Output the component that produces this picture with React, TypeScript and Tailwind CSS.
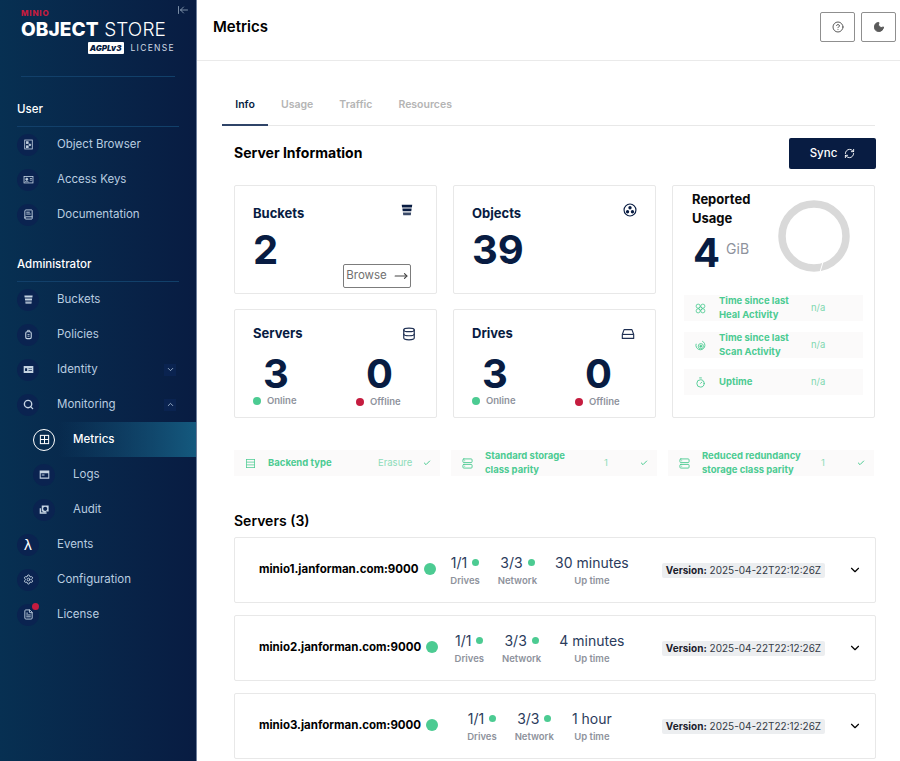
import React from "react";
import { ChevronDown, ChevronUp, Check, CircleHelp, Database, Moon, RefreshCw, Timer, MoveRight, ArrowLeftToLine, Settings, Server, FileText, BookText, KeyRound, Search } from "lucide-react";

const BucketIcon = ({ className }: { className?: string }) => (
  <svg viewBox="0 0 16 16" className={className} fill="currentColor">
    <path d="M2 2h12l-.4 3H2.4z" />
    <path d="M2.7 6.4h10.6l-.4 3H3.1z" />
    <path d="M3.3 10.8h9.4l-.4 3.2H3.7z" opacity="0.8" />
  </svg>
);

const ObjectsIcon = ({ className }: { className?: string }) => (
  <svg viewBox="0 0 16 16" className={className} fill="currentColor">
    <circle cx="8" cy="8" r="6.8" fill="none" stroke="currentColor" strokeWidth="1.3" />
    <circle cx="8" cy="5.4" r="1.9" />
    <circle cx="5.2" cy="10" r="1.9" />
    <circle cx="10.8" cy="10" r="1.9" />
  </svg>
);

const DriveIcon = ({ className }: { className?: string }) => (
  <svg viewBox="0 0 16 16" className={className} fill="none" stroke="currentColor" strokeWidth="1.3">
    <path d="M3.5 3h9l2 5.5v4.5h-13V8.5z" strokeLinejoin="round" />
    <path d="M1.5 8.5h13" />
  </svg>
);

const HealIcon = ({ className }: { className?: string }) => (
  <svg viewBox="0 0 16 16" className={className} fill="none" stroke="currentColor" strokeWidth="1.2">
    <circle cx="4.6" cy="4.6" r="3" />
    <circle cx="11.4" cy="4.6" r="3" />
    <circle cx="4.6" cy="11.4" r="3" />
    <circle cx="11.4" cy="11.4" r="3" />
    <rect x="6" y="6" width="4" height="4" transform="rotate(45 8 8)" />
  </svg>
);

const ScanIcon = ({ className }: { className?: string }) => (
  <svg viewBox="0 0 16 16" className={className} fill="none" stroke="currentColor" strokeWidth="1.2">
    <path d="M3 3.5A6.5 6.5 0 1 0 12.5 3" transform="rotate(-20 8 8)" />
    <circle cx="8.5" cy="9" r="3.8" />
    <circle cx="8.5" cy="9" r="1.5" fill="currentColor" />
  </svg>
);

const StackIcon = ({ className }: { className?: string }) => (
  <svg viewBox="0 0 16 16" className={className} fill="none" stroke="currentColor" strokeWidth="1.1">
    <rect x="2" y="2" width="12" height="12" />
    <path d="M2 6h12M2 10h12" />
  </svg>
);

const MetricsIcon = ({ className }: { className?: string }) => (
  <svg viewBox="0 0 16 16" className={className} fill="none" stroke="currentColor" strokeWidth="1.5">
    <rect x="2" y="2" width="12" height="12" />
    <path d="M8 2v12M2 8h12" />
  </svg>
);

const ObjectBrowserIcon = ({ className }: { className?: string }) => (
  <svg viewBox="0 0 16 16" className={className} fill="none" stroke="currentColor" strokeWidth="1.2">
    <rect x="2.5" y="1.5" width="11" height="13" />
    <rect x="5" y="4" width="2.5" height="2.5" fill="currentColor" />
    <circle cx="10" cy="8.5" r="1.3" fill="currentColor" />
    <rect x="5" y="10" width="2.5" height="2.5" fill="currentColor" />
  </svg>
);

const AccessKeyIcon = ({ className }: { className?: string }) => (
  <svg viewBox="0 0 16 16" className={className} fill="none" stroke="currentColor" strokeWidth="1.2">
    <rect x="1.5" y="3.5" width="13" height="9.5" />
    <circle cx="5.5" cy="7.5" r="1.5" fill="currentColor" />
    <path d="M3 11.5c.6-1.4 4.4-1.4 5 0M10 6.5h3M10 9h3" />
  </svg>
);

const PolicyIcon = ({ className }: { className?: string }) => (
  <svg viewBox="0 0 16 16" className={className} fill="none" stroke="currentColor" strokeWidth="1.6">
    <rect x="4" y="4" width="8" height="10" rx="2" />
    <path d="M6.5 4V2h3v2M6.5 8h3M6.5 10.5h3" strokeWidth="1.2" />
  </svg>
);

const IdentityIcon = ({ className }: { className?: string }) => (
  <svg viewBox="0 0 16 16" className={className} fill="currentColor">
    <path fillRule="evenodd" d="M1 3h14v10H1zM3 6v4h3V6zm5 0v1h5V6zm0 3v1h5V9z" />
  </svg>
);

const LogsIcon = ({ className }: { className?: string }) => (
  <svg viewBox="0 0 16 16" className={className} fill="currentColor">
    <path fillRule="evenodd" d="M1 2h14v12H1zm1.5 4v6.5h11V6zM4 8h4v1.5H4z" />
  </svg>
);

const AuditIcon = ({ className }: { className?: string }) => (
  <svg viewBox="0 0 16 16" className={className} fill="currentColor">
    <path fillRule="evenodd" d="M4 2h10v9h-3.5a3 3 0 0 1-5 0H4zm5 2a3 3 0 1 0 0 6 3 3 0 0 0 0-6z" />
    <path d="M1 6h2v6h8v2H1z" />
  </svg>
);

type NavItem = {
  label: string;
  icon: React.ReactNode;
  sub?: boolean;
  active?: boolean;
  chevron?: "down" | "up";
  badge?: boolean;
};

const userItems: NavItem[] = [
  { label: "Object Browser", icon: <ObjectBrowserIcon className="w-[11px] h-[11px]" /> },
  { label: "Access Keys", icon: <AccessKeyIcon className="w-[11px] h-[11px]" /> },
  { label: "Documentation", icon: <BookText className="w-[11px] h-[11px]" /> },
];

const adminItems: NavItem[] = [
  { label: "Buckets", icon: <BucketIcon className="w-[11px] h-[11px]" /> },
  { label: "Policies", icon: <PolicyIcon className="w-[11px] h-[11px]" /> },
  { label: "Identity", icon: <IdentityIcon className="w-[11px] h-[11px]" />, chevron: "down" },
  { label: "Monitoring", icon: <Search className="w-[11px] h-[11px]" strokeWidth={3} />, chevron: "up" },
  { label: "Metrics", icon: <MetricsIcon className="w-[11px] h-[11px]" />, sub: true, active: true },
  { label: "Logs", icon: <LogsIcon className="w-[11px] h-[11px]" />, sub: true },
  { label: "Audit", icon: <AuditIcon className="w-[11px] h-[11px]" />, sub: true },
  { label: "Events", icon: <span className="text-[14px] leading-none font-['DejaVu_Sans'] text-white">λ</span> },
  { label: "Configuration", icon: <Settings className="w-[11px] h-[11px]" /> },
  { label: "License", icon: <FileText className="w-[11px] h-[11px]" />, badge: true },
];

const NavRow = ({ item }: { item: NavItem }) => (
  <div
    className={`h-[35px] flex items-center gap-[18px] ${item.sub ? "pl-[33px]" : "pl-[17px]"} pr-[20px] ${
      item.active ? "bg-gradient-to-r from-transparent from-30% to-[#14597e] text-white" : "text-[#b9cde0]"
    }`}
  >
    <div
      className={`relative w-[22px] h-[22px] rounded-full flex items-center justify-center shrink-0 ${
        item.active ? "border border-white text-white" : "bg-[#0a2350] text-[#c5d3e2]"
      }`}
    >
      {item.icon}
      {item.badge && <span className="absolute -top-[1px] right-0 w-[7px] h-[7px] rounded-full bg-[#c51c3f]" />}
    </div>
    <span className={`text-[11.5px] flex-1 ${item.active ? "font-medium" : ""}`}>{item.label}</span>
    {item.chevron && (
      <span className="w-[12px] h-[12px] bg-[#0a2350] flex items-center justify-center">
        {item.chevron === "down" ? <ChevronDown className="w-[9px] h-[9px]" /> : <ChevronUp className="w-[9px] h-[9px]" />}
      </span>
    )}
  </div>
);

const SectionTitle = ({ title }: { title: string }) => (
  <div className="h-[50px] mx-[17px] flex items-end pb-[8px] border-b border-[#12406a] text-white text-[11.5px] font-medium leading-[18px]">
    {title}
  </div>
);

const Sidebar = () => (
  <aside className="w-[197px] shrink-0 h-full bg-gradient-to-r from-[#073052] to-[#081c42] border-r border-[#6f7f9b] flex flex-col">
    <div className="h-[77px] mx-[21px] border-b border-[#12406a] relative">
      <ArrowLeftToLine className="absolute left-[156px] top-[4px] w-[12px] h-[12px] text-[#9fb2c6] rotate-0" strokeWidth={1.5} />
      <div className="pt-[7px] text-[#c51c3f] text-[8px] leading-[12px] font-extrabold tracking-[0.8px]">MINIO</div>
      <div className="text-white text-[19px] leading-[20px] mt-[1px] whitespace-nowrap tracking-[0.1px]">
        <span className="font-extrabold">OBJECT</span> <span className="font-light">STORE</span>
      </div>
      <div className="flex items-center justify-end gap-[7px] mt-[2px] h-[12px]">
        <span className="h-[12px] px-[2px] bg-white text-[#081c42] text-[8px] leading-[12px] font-black italic rounded-[1px]">AGPLv3</span>
        <span className="text-[#cfd8e3] text-[8.5px] tracking-[1.3px]">LICENSE</span>
      </div>
    </div>
    <SectionTitle title="User" />
    {userItems.map((item) => (
      <NavRow key={item.label} item={item} />
    ))}
    <SectionTitle title="Administrator" />
    {adminItems.map((item) => (
      <NavRow key={item.label} item={item} />
    ))}
  </aside>
);

const StatusDot = ({ color, label }: { color: string; label: string }) => (
  <div className="flex items-center gap-[6px] text-[9.5px] font-semibold text-[#8e929c] leading-[12px]">
    <span className={`w-[8px] h-[8px] rounded-full ${color}`} />
    {label}
  </div>
);

const CountCard = ({ title, icon, online, offline }: { title: string; icon: React.ReactNode; online: number; offline: number }) => (
  <div className="h-[109px] border border-[#e8e8e8] rounded-[2px] pl-[18px] pr-[20px] pt-[14px]">
    <div className="flex justify-between items-start h-[22px]">
      <span className="text-[13px] font-bold text-[#081c42]">{title}</span>
      <span className="text-[#1e2f52] mt-[3px]">{icon}</span>
    </div>
    <div className="grid grid-cols-[103px_1fr] mt-[8px]">
      <div>
        <div className="text-[40px] leading-[40px] font-bold text-[#081c42] pl-[10px]">{online}</div>
        <div className="mt-[1px]">
          <StatusDot color="bg-[#4ccb92]" label="Online" />
        </div>
      </div>
      <div>
        <div className="text-[40px] leading-[40px] font-bold text-[#081c42] pl-[10px]">{offline}</div>
        <div className="mt-[2px]">
          <StatusDot color="bg-[#c51c3f]" label="Offline" />
        </div>
      </div>
    </div>
  </div>
);

const UsageStat = ({ icon, label }: { icon: React.ReactNode; label: React.ReactNode }) => (
  <div className="h-[26px] bg-[#fbfafa] flex items-center text-[#4ccb92] pl-[11px]">
    <span className="w-[24px] shrink-0">{icon}</span>
    <span className="w-[92px] text-[9.5px] font-bold leading-[14px]">{label}</span>
    <span className="text-[9.5px] font-normal text-[#7fd8b0]">n/a</span>
  </div>
);

const FeatureBox = ({ icon, label, value, valueWidth }: { icon: React.ReactNode; label: React.ReactNode; value: string; valueWidth: string }) => (
  <div className="h-[26px] bg-[#fbfafa] flex items-center text-[#4ccb92] pl-[11px] pr-[9px]">
    <span className="w-[23px] shrink-0">{icon}</span>
    <span className="flex-1 text-[9.5px] font-bold leading-[14px] whitespace-nowrap">{label}</span>
    <span className={`${valueWidth} text-[9.5px] font-normal text-[#8ddcb9]`}>{value}</span>
    <Check className="w-[8px] h-[8px]" strokeWidth={3} />
  </div>
);

const ServerCard = ({ host, uptime }: { host: string; uptime: string }) => (
  <div className="h-[66px] shrink-0 border border-[#e8e8e8] rounded-[2px] flex items-center pl-[24px] pr-[13px]">
    <div className="w-[174px] flex items-center gap-[4px] shrink-0">
      <span className="text-[11.5px] font-bold text-black whitespace-nowrap">{host}</span>
      <span className="w-[12px] h-[12px] rounded-full bg-[#4ccb92] shrink-0 ml-[1px] -mt-[2px]" />
    </div>
    <div className="flex-1 flex justify-center gap-[18px]">
      <Metric value="1/1" label="Drives" dot />
      <Metric value="3/3" label="Network" dot />
      <Metric value={uptime} label="Up time" />
    </div>
    <div className="w-[163px] h-[15px] bg-[#eceef0] rounded-[2px] text-[10px] leading-[15px] text-center text-[#333a45] whitespace-nowrap shrink-0 ml-[16px]">
      <span className="font-bold text-[#1a202b]">Version:</span> 2025-04-22T22:12:26Z
    </div>
    <ChevronDown className="w-[14px] h-[14px] text-black ml-[23px] shrink-0" />
  </div>
);

const Metric = ({ value, label, dot }: { value: string; label: string; dot?: boolean }) => (
  <div className="flex flex-col items-center">
    <div className="flex items-center gap-[5px] text-[14px] leading-[18px] text-[#2b3b5c] whitespace-nowrap">
      {value}
      {dot && <span className="w-[7px] h-[7px] rounded-full bg-[#4ccb92]" />}
    </div>
    <span className="text-[9.5px] leading-[12px] font-semibold text-[#8e929c] mt-[3px]">{label}</span>
  </div>
);

export default function App() {
  return (
    <div className="w-[900px] h-[761px] overflow-hidden flex bg-white font-['Inter',sans-serif]">
      <Sidebar />
      <main className="flex-1 min-w-0">
        <header className="h-[61px] border-b border-[#eaeaea] flex items-center justify-between pl-[16px] pr-[4px] pb-[6px]">
          <h1 className="text-[15px] font-semibold text-black">Metrics</h1>
          <div className="flex gap-[6px]">
            <button className="w-[35px] h-[30px] border border-[#8f8f8f] rounded-[2px] flex items-center justify-center text-[#5a5a5a]">
              <CircleHelp className="w-[12px] h-[12px]" />
            </button>
            <button className="w-[35px] h-[30px] border border-[#8f8f8f] rounded-[2px] flex items-center justify-center text-[#5a5a5a]">
              <Moon className="w-[12px] h-[12px]" fill="currentColor" />
            </button>
          </div>
        </header>
        <div className="pl-[25px] pr-[25px]">
          <nav className="mt-[29px] h-[36px] border-b border-[#e8e8e8] flex text-[10.5px] font-semibold text-[#b4b4b4]">
            <span className="w-[46px] h-[36px] border-b-2 border-[#2f4468] text-[#081c42] flex items-center justify-center pb-[4px]">Info</span>
            <span className="ml-[13px] pb-[6px] flex items-center">Usage</span>
            <span className="ml-[26px] pb-[6px] flex items-center">Traffic</span>
            <span className="ml-[26px] pb-[6px] flex items-center">Resources</span>
          </nav>
          <div className="pl-[12px] -mr-[1px]">
            <div className="flex justify-between items-center mt-[12px] h-[31px]">
              <h2 className="text-[14px] font-bold text-black -mt-[3px]">Server Information</h2>
              <button className="w-[87px] h-[31px] rounded-[2px] bg-[#081c42] text-white text-[11.5px] font-medium flex items-center justify-center gap-[7px]">
                Sync <RefreshCw className="w-[11px] h-[11px]" />
              </button>
            </div>
            <div className="grid grid-cols-[203px_203px_203px] gap-x-[16px] gap-y-[15px] mt-[16px]">
              <div className="h-[109px] border border-[#e8e8e8] rounded-[2px] pl-[18px] pr-[22px] pt-[14px] relative">
                <div className="flex justify-between items-start h-[28px]">
                  <span className="text-[13px] font-bold text-[#081c42] mt-[4px]">Buckets</span>
                  <BucketIcon className="w-[14px] h-[14px] text-[#081c42] mt-[3px]" />
                </div>
                <div className="text-[40px] leading-[44px] font-bold text-[#081c42]">2</div>
                <button className="absolute right-[25px] bottom-[5px] w-[68px] h-[24px] border border-[#7c7c7c] rounded-[2px] text-[#6f6f6f] text-[11.5px] flex items-center justify-center gap-[7px]">
                  Browse <MoveRight className="w-[14px] h-[14px] text-[#444]" />
                </button>
              </div>
              <div className="h-[109px] border border-[#e8e8e8] rounded-[2px] pl-[18px] pr-[18px] pt-[14px]">
                <div className="flex justify-between items-start h-[28px]">
                  <span className="text-[13px] font-bold text-[#081c42] mt-[4px]">Objects</span>
                  <ObjectsIcon className="w-[14px] h-[14px] text-[#081c42] mt-[3px]" />
                </div>
                <div className="text-[40px] leading-[44px] font-bold text-[#081c42]">39</div>
              </div>
              <div className="row-span-2 border border-[#e8e8e8] rounded-[2px] pt-[4px] px-[11px]">
                <div className="flex h-[104px]">
                  <div className="pl-[8px] w-[92px] shrink-0">
                    <div className="text-[13px] leading-[19px] font-bold text-[#0a0a0a]">Reported Usage</div>
                    <div className="flex items-start mt-[3px]">
                      <span className="text-[40px] leading-[44px] font-bold text-[#081c42] ml-[1px]">4</span>
                      <span className="text-[14px] text-[#8e929c] ml-[6px] mt-[7px]">GiB</span>
                    </div>
                  </div>
                  <svg viewBox="0 0 72 72" className="w-[72px] h-[72px] mt-[10px] ml-[2px] shrink-0">
                    <circle cx="36" cy="36" r="32" fill="none" stroke="#d9d9d9" strokeWidth="7.5" />
                    <path d="M42 72 L45 62" stroke="white" strokeWidth="1" />
                  </svg>
                </div>
                <div className="flex flex-col gap-[11px] mt-[1px]">
                  <UsageStat icon={<HealIcon className="w-[11px] h-[11px]" />} label={<>Time since last<br />Heal Activity</>} />
                  <UsageStat icon={<ScanIcon className="w-[11px] h-[11px]" />} label={<>Time since last<br />Scan Activity</>} />
                  <UsageStat icon={<Timer className="w-[11px] h-[11px]" />} label="Uptime" />
                </div>
              </div>
              <CountCard title="Servers" icon={<Database className="w-[14px] h-[14px]" />} online={3} offline={0} />
              <CountCard title="Drives" icon={<DriveIcon className="w-[14px] h-[14px]" />} online={3} offline={0} />
            </div>
            <div className="grid grid-cols-[206px_206px_206px] gap-x-[11px] mt-[32px]">
              <FeatureBox icon={<StackIcon className="w-[11px] h-[11px]" />} label="Backend type" value="Erasure" valueWidth="w-[45px]" />
              <FeatureBox icon={<Server className="w-[11px] h-[11px]" />} label={<>Standard storage<br />class parity</>} value="1" valueWidth="w-[36px]" />
              <FeatureBox icon={<Server className="w-[11px] h-[11px]" />} label={<>Reduced redundancy<br />storage class parity</>} value="1" valueWidth="w-[36px]" />
            </div>
            <h2 className="text-[14px] font-semibold text-black mt-[35px] leading-[20px]">Servers (3)</h2>
            <div className="flex flex-col gap-[12px] mt-[6px]">
              <ServerCard host="minio1.janforman.com:9000" uptime="30 minutes" />
              <ServerCard host="minio2.janforman.com:9000" uptime="4 minutes" />
              <ServerCard host="minio3.janforman.com:9000" uptime="1 hour" />
            </div>
          </div>
        </div>
      </main>
    </div>
  );
}
